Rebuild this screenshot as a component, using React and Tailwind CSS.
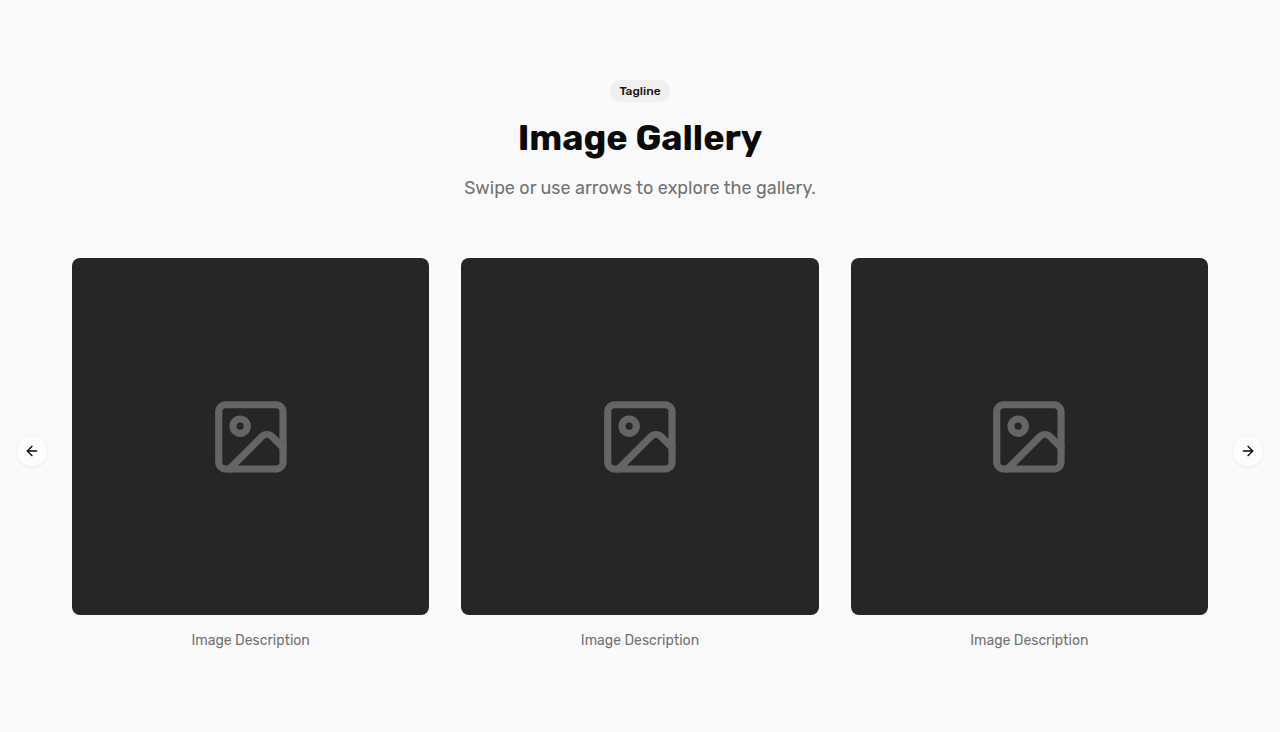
import { useRef } from "react";
import { ArrowLeft, ArrowRight, Image } from "lucide-react";

const images = [
  { id: 1, description: "Image Description" },
  { id: 2, description: "Image Description" },
  { id: 3, description: "Image Description" },
];

const ArrowButton = ({ label, onClick, children }) => (
  <button
    type="button"
    aria-label={label}
    onClick={onClick}
    className="mb-2 flex size-8 shrink-0 items-center justify-center rounded-full border border-[#f5f5f5] bg-[#fdfdfd] text-neutral-950 shadow-xs"
  >
    {children}
  </button>
);

const GalleryItem = ({ description }) => (
  <figure className="flex shrink-0 basis-[calc((100%-64px)/3)] flex-col gap-4">
    <div className="flex aspect-square w-full items-center justify-center rounded-lg bg-neutral-800">
      <Image className="h-auto w-[24%] text-[#656565]" />
    </div>
    <figcaption className="text-center text-sm text-neutral-500">
      {description}
    </figcaption>
  </figure>
);

const App = () => {
  const track = useRef(null);

  const scroll = (direction) => {
    const width = track.current.clientWidth / 3;
    track.current.scrollBy({ left: direction * width, behavior: "smooth" });
  };

  return (
    <section className="flex min-h-screen flex-col gap-14 bg-[#fafafa] px-4 py-20 font-['Rubik','Roboto',sans-serif]">
      <div className="flex flex-col items-center gap-4 text-center">
        <span className="rounded-full bg-[#f0f0f0] px-[9px] py-[3px] text-xs font-medium text-neutral-900">
          Tagline
        </span>
        <h2 className="text-4xl font-bold text-neutral-950">Image Gallery</h2>
        <p className="text-lg text-neutral-500">
          Swipe or use arrows to explore the gallery.
        </p>
      </div>

      <div className="flex items-center gap-6">
        <ArrowButton label="Previous images" onClick={() => scroll(-1)}>
          <ArrowLeft className="size-4" />
        </ArrowButton>
        <div ref={track} className="flex min-w-0 flex-1 gap-8 overflow-hidden">
          {images.map((image) => (
            <GalleryItem key={image.id} description={image.description} />
          ))}
        </div>
        <ArrowButton label="Next images" onClick={() => scroll(1)}>
          <ArrowRight className="size-4" />
        </ArrowButton>
      </div>
    </section>
  );
};

export default App;
